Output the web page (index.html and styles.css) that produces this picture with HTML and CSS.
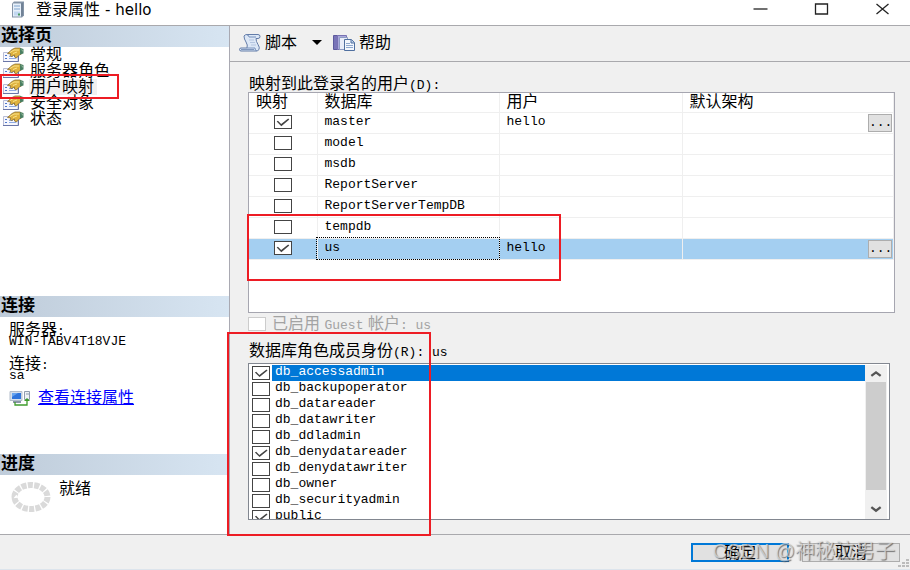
FILE: index.html
```html
<!DOCTYPE html>
<html lang="zh-CN">
<head>
<meta charset="utf-8">
<meta name="viewport" content="width=device-width, initial-scale=1">
<title>登录属性 - hello</title>
<link rel="stylesheet" href="styles.css">
</head>
<body>
<svg class="defs" width="0" height="0" aria-hidden="true">
  <defs>
    <symbol id="page-icon" viewBox="0 0 22 16">
      <path d="M1.500 5.500H16V14.500H1.500Z" fill="#f6f7fd" stroke="#b9bdd6"/>
      <path d="M1 14.500H16.500V9" fill="none" stroke="#6a76a8"/>
      <path d="M3 8.500h2M3 11.500h2" stroke="#4f78cc"/>
      <path d="M7 9.500h4M7 11.500h7" stroke="#8fabe2"/>
      <path d="M5.500 6.500L10 2.500l3-1.500h5l1.500 1v5l-3 1.500-2 2.500-2-1 0-2-3 1.500-1.500-1 1-1.500z" fill="#dfb23f" stroke="#7c6126" stroke-width=".7"/>
      <path d="M8 5.500L12 3h5M11 6.500l4-1.500" fill="none" stroke="#fbe48a"/>
      <path d="M18 1l3.500 1v4.500L18 7.500z" fill="#4a7f62"/>
      <path d="M18.500 2l2.500 1v2z" fill="#8ab294"/>
    </symbol>
  </defs>
</svg>
<div class="window">
  <header class="titlebar">
    <svg class="server-icon" viewBox="0 0 14 16" aria-hidden="true">
      <path d="M3 0h10v14l-2 2H1V2z" fill="#8595a8"/>
      <path d="M2 2h8v13H2z" fill="#e7f0fa"/>
      <path d="M10 2l2-1v13l-2 1z" fill="#718296"/>
      <path d="M3 4.500h6M3 7.500h6" stroke="#7fa4cd"/>
      <path d="M3 10h6v4H3z" fill="#c2d8f1"/>
      <path d="M7 12h2v2H7z" fill="#4a9a5d"/>
    </svg>
    <h1>登录属性 <span>- hello</span></h1>
    <div class="window-controls">
      <button type="button" aria-label="最小化"><svg viewBox="0 0 14 12"><path d="M0 6h14"/></svg></button>
      <button type="button" aria-label="最大化"><svg viewBox="0 0 14 12"><path d="M1 1h12v10H1z"/></svg></button>
      <button type="button" aria-label="关闭"><svg viewBox="0 0 14 12"><path d="M1 1l12 10M13 1L1 11"/></svg></button>
    </div>
  </header>

  <div class="body">
    <aside class="sidebar">
      <section class="pages">
        <h2>选择页</h2>
        <nav>
          <a href="#"><svg viewBox="0 0 22 16"><use href="#page-icon"/></svg><span>常规</span></a>
          <a href="#"><svg viewBox="0 0 22 16"><use href="#page-icon"/></svg><span>服务器角色</span></a>
          <a href="#" class="current" aria-current="page"><svg viewBox="0 0 22 16"><use href="#page-icon"/></svg><span>用户映射</span></a>
          <a href="#"><svg viewBox="0 0 22 16"><use href="#page-icon"/></svg><span>安全对象</span></a>
          <a href="#"><svg viewBox="0 0 22 16"><use href="#page-icon"/></svg><span>状态</span></a>
          <div class="mark mark-page"></div>
        </nav>
      </section>
      <section class="connection">
        <h2>连接</h2>
        <dl>
          <dt>服务器<span class="mono">:</span></dt><dd>WIN-TABV4T18VJE</dd>
          <dt>连接<span class="mono">:</span></dt><dd>sa</dd>
        </dl>
        <div class="connection-link">
          <svg viewBox="0 0 22 16" aria-hidden="true">
            <path d="M1 1.500h12v9H1z" fill="#d7e0ec" stroke="#b3bdcb"/>
            <path d="M3 3h9v6H3z" fill="#2f74dc"/>
            <path d="M3 3h6L3 7z" fill="#67a4f0"/>
            <path d="M4 12h8" stroke="#8a96a8" stroke-width="2"/>
            <path d="M15.500 1.500h5v8h-5z" fill="#eef1f5" stroke="#8f9bad"/>
            <path d="M17 4h3" stroke="#8f9bad"/>
            <path d="M6 12v3h12v-5" fill="none" stroke="#3f9c2c" stroke-width="1.300"/>
            <path d="M15 11l3-3 3 3z" fill="#3f9c2c"/>
          </svg>
          <a href="#">查看连接属性</a>
        </div>
      </section>
      <section class="progress">
        <h2>进度</h2>
        <div class="progress-state">
          <svg viewBox="0 0 40 30" aria-hidden="true"><ellipse cx="20" cy="15" rx="16.500" ry="12" pathLength="140" /></svg>
          <span>就绪</span>
        </div>
      </section>
    </aside>

    <main>
      <div class="toolbar">
        <button type="button">
          <svg viewBox="0 0 22 18" aria-hidden="true">
            <path d="M5 2q1-1.500 3-1.500h11q2 0 2 2t-2 2h-2q0 3 2 6t1 5q-1 1.500-3 1.500H2q-1.500 0-1.500-1.500T2 14h6q1-3-1-6T5 2z" fill="#dce7f6" stroke="#637ca8"/>
            <path d="M8 1q2 0 2 2h7M8 14h8q0 3 2 3" fill="none" stroke="#7690bb"/>
            <path d="M10 6h5M11 8.500h5M12 11h5" stroke="#b4c5e0"/>
            <path d="M2 15.500h13" stroke="#8097bd"/>
          </svg>
          <span>脚本</span>
          <svg class="caret" viewBox="0 0 10 5" aria-hidden="true"><path d="M0 0h10L5 5z"/></svg>
        </button>
        <button type="button">
          <svg viewBox="0 0 22 18" aria-hidden="true">
            <path d="M.5 1.500h4v14h-4z" fill="#7974b8" stroke="#5d5a9d"/>
            <path d="M4.500 1.500h9v14h-9z" fill="#aaa8dc" stroke="#7771b2"/>
            <path d="M6.500 3.500h8v12h-8z" fill="#e9edf9" stroke="#8d9bc3"/>
            <path d="M11.500 5.500h7l3 3v8h-10z" fill="#f3f7fd" stroke="#4f6f9f"/>
            <path d="M18 5.500V9h3.500" fill="#bbcce6" stroke="#4f6f9f"/>
            <path d="M13 9.500h4M13 11.500h7M13 13.500h7" stroke="#8fa8ce"/>
          </svg>
          <span>帮助</span>
        </button>
      </div>

      <div class="content">
        <div class="caption" id="map-label">映射到此登录名的用户<span class="mono">(D):</span></div>
        <div class="grid">
          <table aria-labelledby="map-label">
            <colgroup><col class="c-map"><col class="c-db"><col class="c-user"><col></colgroup>
            <thead><tr><th>映射</th><th>数据库</th><th>用户</th><th>默认架构</th></tr></thead>
            <tbody>
              <tr><td><input type="checkbox" aria-label="master" checked></td><td>master</td><td>hello</td><td><button type="button" class="more">...</button></td></tr>
              <tr><td><input type="checkbox" aria-label="model"></td><td>model</td><td></td><td></td></tr>
              <tr><td><input type="checkbox" aria-label="msdb"></td><td>msdb</td><td></td><td></td></tr>
              <tr><td><input type="checkbox" aria-label="ReportServer"></td><td>ReportServer</td><td></td><td></td></tr>
              <tr><td><input type="checkbox" aria-label="ReportServerTempDB"></td><td>ReportServerTempDB</td><td></td><td></td></tr>
              <tr><td><input type="checkbox" aria-label="tempdb"></td><td>tempdb</td><td></td><td></td></tr>
              <tr class="selected"><td><input type="checkbox" aria-label="us" checked></td><td class="focused">us</td><td>hello</td><td><button type="button" class="more">...</button></td></tr>
            </tbody>
          </table>
          <div class="mark mark-row"></div>
        </div>
        <label class="guest"><input type="checkbox" disabled><span>已启用 <span class="mono">Guest</span> 帐户<span class="mono">: us</span></span></label>
        <div class="caption roles-caption" id="role-label">数据库角色成员身份<span class="mono">(R): us</span></div>
        <div class="roles">
          <div class="listbox">
            <ul aria-labelledby="role-label">
              <li><label><input type="checkbox" checked><span class="active">db_accessadmin</span></label></li>
              <li><label><input type="checkbox"><span>db_backupoperator</span></label></li>
              <li><label><input type="checkbox"><span>db_datareader</span></label></li>
              <li><label><input type="checkbox"><span>db_datawriter</span></label></li>
              <li><label><input type="checkbox"><span>db_ddladmin</span></label></li>
              <li><label><input type="checkbox" checked><span>db_denydatareader</span></label></li>
              <li><label><input type="checkbox"><span>db_denydatawriter</span></label></li>
              <li><label><input type="checkbox"><span>db_owner</span></label></li>
              <li><label><input type="checkbox"><span>db_securityadmin</span></label></li>
              <li><label><input type="checkbox" checked><span>public</span></label></li>
            </ul>
            <div class="scrollbar" aria-hidden="true">
              <svg viewBox="0 0 10 6"><path d="M1 5l4-3 4 3"/></svg>
              <div class="thumb"></div>
              <svg viewBox="0 0 10 6"><path d="M1 1l4 3 4-3"/></svg>
            </div>
          </div>
          <div class="mark mark-roles"></div>
        </div>
      </div>
    </main>
  </div>

  <footer>
    <button type="button" class="primary">确定</button>
    <button type="button">取消</button>
    <div class="watermark">CSDN @神秘泣男子</div>
    <svg class="grip" viewBox="0 0 12 9" aria-hidden="true"><path d="M8 0h3v2H8zM4 3h3v2H4zM8 3h3v2H8zM0 6h3v2H0zM4 6h3v2H4zM8 6h3v2H8z"/></svg>
  </footer>
</div>
</body>
</html>
```
FILE: styles.css
```css
* { box-sizing: border-box; }

body {
  margin: 0;
  background: #f0f0f0;
  color: #000;
  font: 16px/16px "Liberation Sans", "Noto Sans CJK SC", sans-serif;
}

button { font: inherit; color: inherit; margin: 0; padding: 0; border: 0; background: none; }
h1, h2, dl, dd, ul { margin: 0; padding: 0; }
.defs { position: absolute; }

.mono, dd, td, .listbox { font-family: "Liberation Mono", monospace; font-size: 13px; }
.mono { line-height: 8px; }

.window { min-height: 100vh; display: flex; flex-direction: column; }

.titlebar {
  display: flex;
  align-items: center;
  height: 26px;
  padding: 0 20px 7px 11px;
  background: #fff;
  border-bottom: 1px solid #a9a9ad;
}
.server-icon { width: 14px; height: 17px; margin-right: 11px; }
.titlebar h1 { flex: 1; font: 16px/18px "DejaVu Sans", "Noto Sans CJK SC", sans-serif; padding-top: 2px; }
.titlebar h1 span { font-size: 15px; }
.window-controls { display: flex; gap: 46px; }
.window-controls button { height: 12px; display: flex; }
.window-controls svg { width: 15px; height: 12px; fill: none; stroke: #222; stroke-width: 1.3; }

.body { flex: 1; display: flex; }

.sidebar {
  flex: 0 0 230px;
  display: flex;
  flex-direction: column;
  background: #fff;
  border-right: 1px solid #a9a9b2;
}
.sidebar h2 {
  height: 21px;
  padding-left: 1px;
  font-size: 17px;
  line-height: 19px;
  background: linear-gradient(90deg, #bfccda, #d7e5f2);
}
.pages { flex: 1; }
.pages nav { position: relative; }
.pages nav a { display: flex; height: 16px; padding-left: 2px; color: #000; text-decoration: none; }
.pages nav svg { width: 22px; height: 16px; margin-right: 5px; }
.pages nav span { padding: 0 1px; line-height: 16px; }
.pages .current span { background: #f0f0f0; padding-right: 3px; }
.connection { height: 158px; }
dl { padding: 7px 9px 0; }
dt { line-height: 12px; }
dd { line-height: 12px; margin-bottom: 10px; }
dd:last-child { margin-bottom: 8px; }
.connection-link { display: flex; align-items: center; gap: 7px; padding-left: 9px; }
.connection-link svg { width: 22px; height: 16px; }
.connection-link a { color: #00f; }
.progress { height: 80px; }
.progress-state { display: flex; gap: 8px; padding: 6px 0 0 11px; }
.progress-state svg { width: 40px; height: 32px; fill: none; stroke: #dadada; stroke-width: 6; stroke-dasharray: 8 2; }

main { flex: 1; min-width: 0; display: flex; flex-direction: column; }
.toolbar {
  display: flex;
  align-items: center;
  gap: 11px;
  height: 36px;
  padding: 0 9px 2px;
  border-bottom: 1px solid #a9a9ad;
}
.toolbar button { display: flex; align-items: center; gap: 4px; }
.toolbar svg { width: 22px; height: 18px; }
.toolbar .caret { width: 10px; height: 5px; margin-left: 11px; }

.content { flex: 1; display: flex; flex-direction: column; padding: 13px 15px 14px 18px; }
.caption { line-height: 17px; padding-left: 1px; }
.grid {
  position: relative;
  flex: 1;
  background: #fff;
  border: 1px solid #a6a6b0;
}
table { width: 100%; table-layout: fixed; border-collapse: collapse; }
.c-map { width: 68px; }
.c-db { width: 182px; }
.c-user { width: 183px; }
th, td { padding: 0 7px; text-align: left; border: 1px solid #efefef; font-weight: 400; }
th { height: 19px; border-top: 0; line-height: 16px; }
td { height: 21px; line-height: 16px; padding: 0 1px 2px 7px; }
th:first-child, td:first-child { border-left: 0; }
td:first-child { text-align: center; padding: 0; }
td:last-child { padding-bottom: 0; }
.selected td { background: #a4cff1; }
td.focused { outline: 1px dotted #000; }
.more {
  display: block;
  width: 24px;
  height: 18px;
  margin: 0 0 0 auto;
  background: #e1e1e1;
  border: 1px solid #adadad;
}

input[type="checkbox"] {
  appearance: none;
  flex: none;
  width: 18px;
  height: 14px;
  margin: 0;
  background: #fff;
  border: 1px solid #444;
  vertical-align: middle;
}
input:checked::before {
  content: "";
  display: block;
  height: 12px;
  background: #444;
  clip-path: polygon(12% 46%, 20% 40%, 40% 66%, 84% 20%, 91% 29%, 41% 84%);
}
input[type="checkbox"]:disabled { border-color: #ccc; }

.guest { display: flex; align-items: center; gap: 6px; height: 21px; color: #a3a3a3; }
.roles-caption { margin-top: 8px; margin-bottom: 4px; }
.roles { position: relative; margin-right: 5px; }
.listbox {
  display: flex;
  height: 157px;
  overflow: hidden;
  padding: 1px 2px 0 3px;
  background: #fff;
  border: 1px solid #828790;
}
.listbox ul { flex: 1; list-style: none; }
.listbox label { display: flex; align-items: center; gap: 2px; height: 16px; }
.listbox label span { flex: 1; height: 16px; padding-left: 3px; line-height: 13px; }
.listbox .active { background: #0078d7; color: #fff; }
.scrollbar {
  width: 22px;
  display: flex;
  flex-direction: column;
  align-items: center;
  padding: 5px 0 6px;
  background: #f0f0f0;
}
.scrollbar svg { width: 12px; height: 7px; fill: none; stroke: #555; stroke-width: 2; }
.thumb { width: 20px; height: 108px; margin: 5px 0 auto; background: #cdcdcd; }

footer {
  position: relative;
  display: flex;
  justify-content: flex-end;
  gap: 13px;
  height: 36px;
  padding: 8px 10px;
  border-top: 1px solid #a9a9ad;
  border-bottom: 1px solid #dce4ec;
}
footer button { width: 98px; height: 19px; line-height: 15px; background: #e1e1e1; border: 1px solid #adadad; }
footer .primary { border: 2px solid #0078d7; }
.watermark {
  position: absolute;
  right: 15px;
  top: 3px;
  font: 20px/26px "Liberation Sans", "Noto Sans CJK SC", sans-serif;
  color: rgba(225, 225, 225, .7);
  text-shadow: 1px 1px 1px rgba(70, 70, 70, .7);
  white-space: nowrap;
}
.grip { position: absolute; right: 0; bottom: 1px; width: 12px; height: 9px; fill: #bcbcbc; }

.mark { position: absolute; border: 2px solid #ed1c24; pointer-events: none; z-index: 1; }
.mark-page { left: 0; top: 27px; width: 119px; height: 25px; }
.mark-row { left: -2px; top: 121px; width: 314px; height: 67px; }
.mark-roles { left: -21px; top: -31px; width: 204px; bottom: -16px; }
```
